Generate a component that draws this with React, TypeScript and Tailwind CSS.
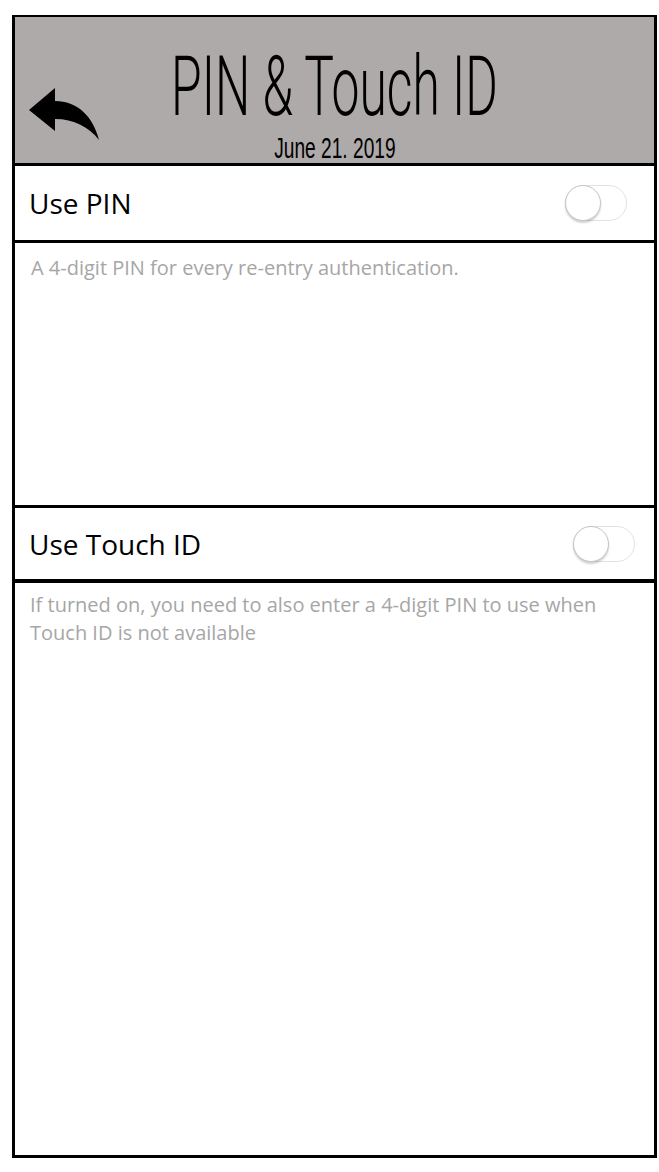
import React from "react";

function BackArrow() {
  return (
    <svg viewBox="25 85 75 58" className="h-[58px] w-[75px]">
      <path
        d="M27 110 L53 88 L53 101 C75 101 91 116 97 140 C87 127 72 119 53 119 L53 131 Z"
        fill="#000"
      />
    </svg>
  );
}

function Toggle() {
  return (
    <div className="flex h-[36px] w-[62px] items-center rounded-full border border-[#e2e2e2] bg-white">
      <div className="-ml-px h-[36px] w-[36px] rounded-full border border-[#c6c6c6] bg-white shadow-[0_2px_2px_rgba(0,0,0,0.18)]" />
    </div>
  );
}

export default function App() {
  return (
    <div className="h-[1172px] w-[659px] bg-white pl-[12px] pt-[15px] font-['Open_Sans',sans-serif]">
      <div className="flex h-[1143px] w-[645px] flex-col border-[3px] border-t-2 border-black">
        {/* header */}
        <div className="relative flex h-[149px] flex-col items-center border-b-[3px] border-black bg-[#aeaaa9] pt-[28px]">
          <div className="absolute left-[12px] top-[68px]">
            <BackArrow />
          </div>
          <span className="inline-block scale-x-[0.6] font-['Roboto',sans-serif] text-[83px] font-light leading-none text-black">
            PIN &amp; Touch ID
          </span>
          <span className="mt-[6px] inline-block scale-x-[0.66] font-['Liberation_Sans',sans-serif] text-[29px] leading-none text-black">
            June 21. 2019
          </span>
        </div>

        {/* PIN */}
        <div className="flex h-[77px] items-center justify-between border-b-[3px] border-black pl-[14px] pr-[27px]">
          <span className="text-[28px] leading-[38px] text-black">Use PIN</span>
          <Toggle />
        </div>
        <div className="h-[265px] border-b-[3px] border-black px-[16px] pt-[11px]">
          <p className="text-[20px] leading-[28px] text-[#a6a6a6]">
            A 4-digit PIN for every re-entry authentication.
          </p>
        </div>

        {/* Touch ID */}
        <div className="flex h-[75px] items-center justify-between border-b-4 border-black pl-[14px] pr-[19px]">
          <span className="text-[28px] leading-[38px] text-black">Use Touch ID</span>
          <Toggle />
        </div>
        <div className="flex-1 px-[15px] pt-[8px]">
          <p className="w-[600px] text-[20px] leading-[28px] text-[#a6a6a6]">
            If turned on, you need to also enter a 4-digit PIN to use when Touch ID is not available
          </p>
        </div>
      </div>
    </div>
  );
}
